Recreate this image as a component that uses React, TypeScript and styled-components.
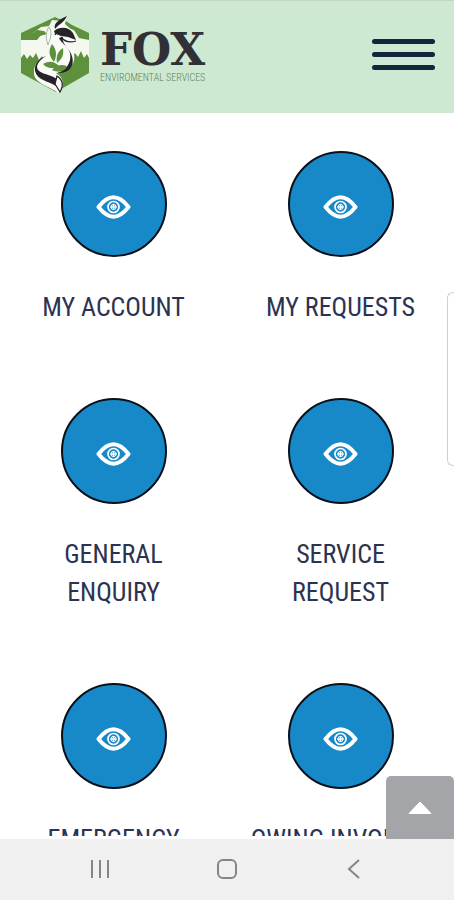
import React from 'react';
import styled, { createGlobalStyle } from 'styled-components';

const condensed = `'Roboto Condensed', 'Liberation Sans Narrow', 'DejaVu Sans Condensed', Roboto, sans-serif`;

const GlobalStyle = createGlobalStyle`
  *, *::before, *::after { box-sizing: border-box; }
  body { margin: 0; background: #fff; color: #2b3350; font-family: ${condensed}; }
  button { border: 0; padding: 0; background: none; font: inherit; color: inherit; cursor: pointer; }
`;

const Screen = styled.div`
  display: flex;
  flex-direction: column;
  height: 100vh;
  overflow: hidden;
  position: relative;
`;

const Header = styled.header`
  display: flex;
  flex: none;
  align-items: flex-start;
  justify-content: space-between;
  padding: 14px 19px 18px 20px;
  background: #cee9d1;
  border-top: 1px solid #c3d6c5;
`;

const Brand = styled.a`
  display: flex;
  gap: 8px;
  text-decoration: none;
`;

const Emblem = styled.svg`
  width: 72px;
  height: 80px;
`;

const BrandText = styled.span`
  display: flex;
  flex-direction: column;
  padding-top: 13px;
`;

const BrandName = styled.span`
  font: bold 45px/44px 'DejaVu Serif', serif;
  color: #303036;
`;

const BrandLine = styled.span`
  font: 300 10px/12px ${condensed};
  color: #5f8058;
  white-space: nowrap;
`;

const MenuButton = styled.button`
  margin-top: 24px;
  display: flex;
  flex-direction: column;
  gap: 8px;
`;

const MenuBar = styled.span`
  width: 63px;
  height: 5px;
  border-radius: 3px;
  background: #14263c;
`;

const Viewport = styled.main`
  flex: 1;
  min-height: 0;
  overflow: hidden;
  margin-bottom: 3px;
`;

const Tiles = styled.nav`
  display: grid;
  grid-template-columns: 1fr 1fr;
  row-gap: 72px;
  padding-top: 38px;
`;

const Tile = styled.a`
  display: flex;
  flex-direction: column;
  align-items: center;
  gap: 31px;
  color: inherit;
  text-decoration: none;
`;

const Disc = styled.span`
  display: grid;
  place-items: center;
  width: 106px;
  height: 106px;
  padding-top: 6px;
  border: 2px solid #0b1018;
  border-radius: 50%;
  background: #1788c8;
`;

const Label = styled.span<{ $narrow?: boolean }>`
  max-width: ${(p) => (p.$narrow ? '130px' : 'none')};
  font-size: 26px;
  line-height: 38px;
  text-align: center;
  white-space: ${(p) => (p.$narrow ? 'normal' : 'nowrap')};
`;

const EdgeHandle = styled.div`
  position: absolute;
  top: 292px;
  right: 0;
  width: 7px;
  height: 174px;
  border: 1px solid #cfcfcf;
  border-right: 0;
  border-radius: 6px 0 0 6px;
  background: #fff;
`;

const ToTop = styled.button`
  position: absolute;
  right: 0;
  bottom: 61px;
  display: grid;
  place-items: center;
  width: 68px;
  height: 63px;
  border-radius: 5px 5px 0 0;
  background: #a4a5a9;
`;

const SystemBar = styled.footer`
  display: grid;
  flex: none;
  grid-template-columns: repeat(3, 1fr);
  place-items: center;
  height: 61px;
  padding: 0 8% 2px;
  background: #f0f0f0;
`;

const SystemButton = styled.button`
  display: grid;
  place-items: center;
  width: 24px;
  height: 24px;
`;

const Eye = () => (
  <svg width="35" height="24" viewBox="0 0 35 24" fill="none" stroke="#fff" aria-hidden="true">
    <path d="M2.500 12 C8 5 12 2.300 17.500 2.300 C23 2.300 27 5 32.500 12 C27 19 23 21.700 17.500 21.700 C12 21.700 8 19 2.500 12Z" strokeWidth="4" strokeLinejoin="round" />
    <circle cx="17.500" cy="12" r="5.500" strokeWidth="1.700" />
    <circle cx="17.500" cy="12" r="2.600" strokeWidth="1" />
    <path d="M17.500 9v6M14.500 12h6" strokeWidth="1.400" />
  </svg>
);

const FoxEmblem = () => (
  <Emblem viewBox="0 0 72 80" aria-hidden="true">
    <path d="M35 2 69 18v40L36 77 1 58V18Z" fill="#5d913c" />
    <path d="M1 25h16l4-5-8-2 8-6 8-1 3-6 10 1 12 9 5 8 10 2v18l-2-4-3 4-3-7-3 6-3-4-3 5-4-3-3 6H24l-2-5-3 4-3-7-3 5-3-3-3 4-3-5-3 4Z" fill="#f4f8ef" />
    <path d="M9 21 17 15l7 1 3 3-7 2M43 4l10 7 6 6-8-3-8-1" fill="#5d913c" />
    <path d="M47 1c-7 5-13 7-15 13-5 6-5 14-1 20l-4 7c-8 3-14 8-13 18 1 9 14 12 25 19 6-8 5-15-3-20l7-1c11-5 14-14 9-22l-4-7 9-1-3-10-9-8Z" fill="#fafbf8" />
    <path d="M47 1c-7 3-14 7-12 13 4-5 9-6 12-13ZM34 16c6-5 15-4 19 2l3 7-8-3-7-1c-3-2-6 0-7-5Z" fill="#252529" />
    <path d="M39 23c2 6 14 10 11 22-2 7-6 11-13 13 12 1 18-7 15-17-2-8-11-12-9-19Z" fill="#252529" />
    <path d="M41 22c4 5 9 6 15 4M38 14l-3 6" fill="none" stroke="#252529" strokeWidth="1.300" />
    <path d="M26 41c-7 4-12 11-7 15 5 4 15 4 20 10l-3 5c-8-5-19-6-21-15-1-8 5-13 11-15Z" fill="#252529" />
    <path d="M37 61c6 4 7 9 3 16l-5-8Z" fill="#fafbf8" stroke="#252529" strokeWidth="1.200" />
    <path d="M29 12c-4 5-3 13-1 18 2-6 5-12 1-18Z" fill="#f8faf4" stroke="#8b9886" strokeWidth=".7" />
    <path d="M32 29c-4 7-3 12 2 18 3-6 3-12-2-18ZM43 33c-6 4-7 9-6 15 5-4 7-8 6-15ZM23 49c7-4 12-2 16 2-6 3-12 3-16-2ZM32 55c4-5 9-6 15-4-3 6-8 7-15 4Z" fill="#5d913c" />
  </Emblem>
);

const items = [
  { label: 'MY ACCOUNT' },
  { label: 'MY REQUESTS' },
  { label: 'GENERAL ENQUIRY', narrow: true },
  { label: 'SERVICE REQUEST', narrow: true },
  { label: 'EMERGENCY' },
  { label: 'OWING INVOICES' },
];

export default function App() {
  return (
    <>
      <GlobalStyle />
      <Screen>
        <Header>
          <Brand href="#home">
            <FoxEmblem />
            <BrandText>
              <BrandName>FOX</BrandName>
              <BrandLine>ENVIROMENTAL SERVICES</BrandLine>
            </BrandText>
          </Brand>
          <MenuButton aria-label="Open menu">
            <MenuBar /><MenuBar /><MenuBar />
          </MenuButton>
        </Header>
        <Viewport>
          <Tiles>
            {items.map((item) => (
              <Tile key={item.label} href="#section">
                <Disc><Eye /></Disc>
                <Label $narrow={item.narrow}>{item.label}</Label>
              </Tile>
            ))}
          </Tiles>
        </Viewport>
        <EdgeHandle />
        <ToTop aria-label="Back to top">
          <svg width="24" height="14" viewBox="0 0 24 14" aria-hidden="true">
            <path d="M12 1 23 12.500H1Z" fill="#fff" stroke="#fff" strokeLinejoin="round" />
          </svg>
        </ToTop>
        <SystemBar>
          <SystemButton aria-label="Recent apps">
            <svg width="20" height="20" viewBox="0 0 20 20" stroke="#858585" strokeWidth="2" aria-hidden="true"><path d="M2 1v18M10 1v18M18 1v18" /></svg>
          </SystemButton>
          <SystemButton aria-label="Home">
            <svg width="22" height="22" viewBox="0 0 22 22" fill="none" stroke="#858585" strokeWidth="2" aria-hidden="true"><rect x="2" y="2" width="18" height="18" rx="5" /></svg>
          </SystemButton>
          <SystemButton aria-label="Back">
            <svg width="20" height="20" viewBox="0 0 20 20" fill="none" stroke="#858585" strokeWidth="2" aria-hidden="true"><path d="M15 1 5 10l10 9" /></svg>
          </SystemButton>
        </SystemBar>
      </Screen>
    </>
  );
}
